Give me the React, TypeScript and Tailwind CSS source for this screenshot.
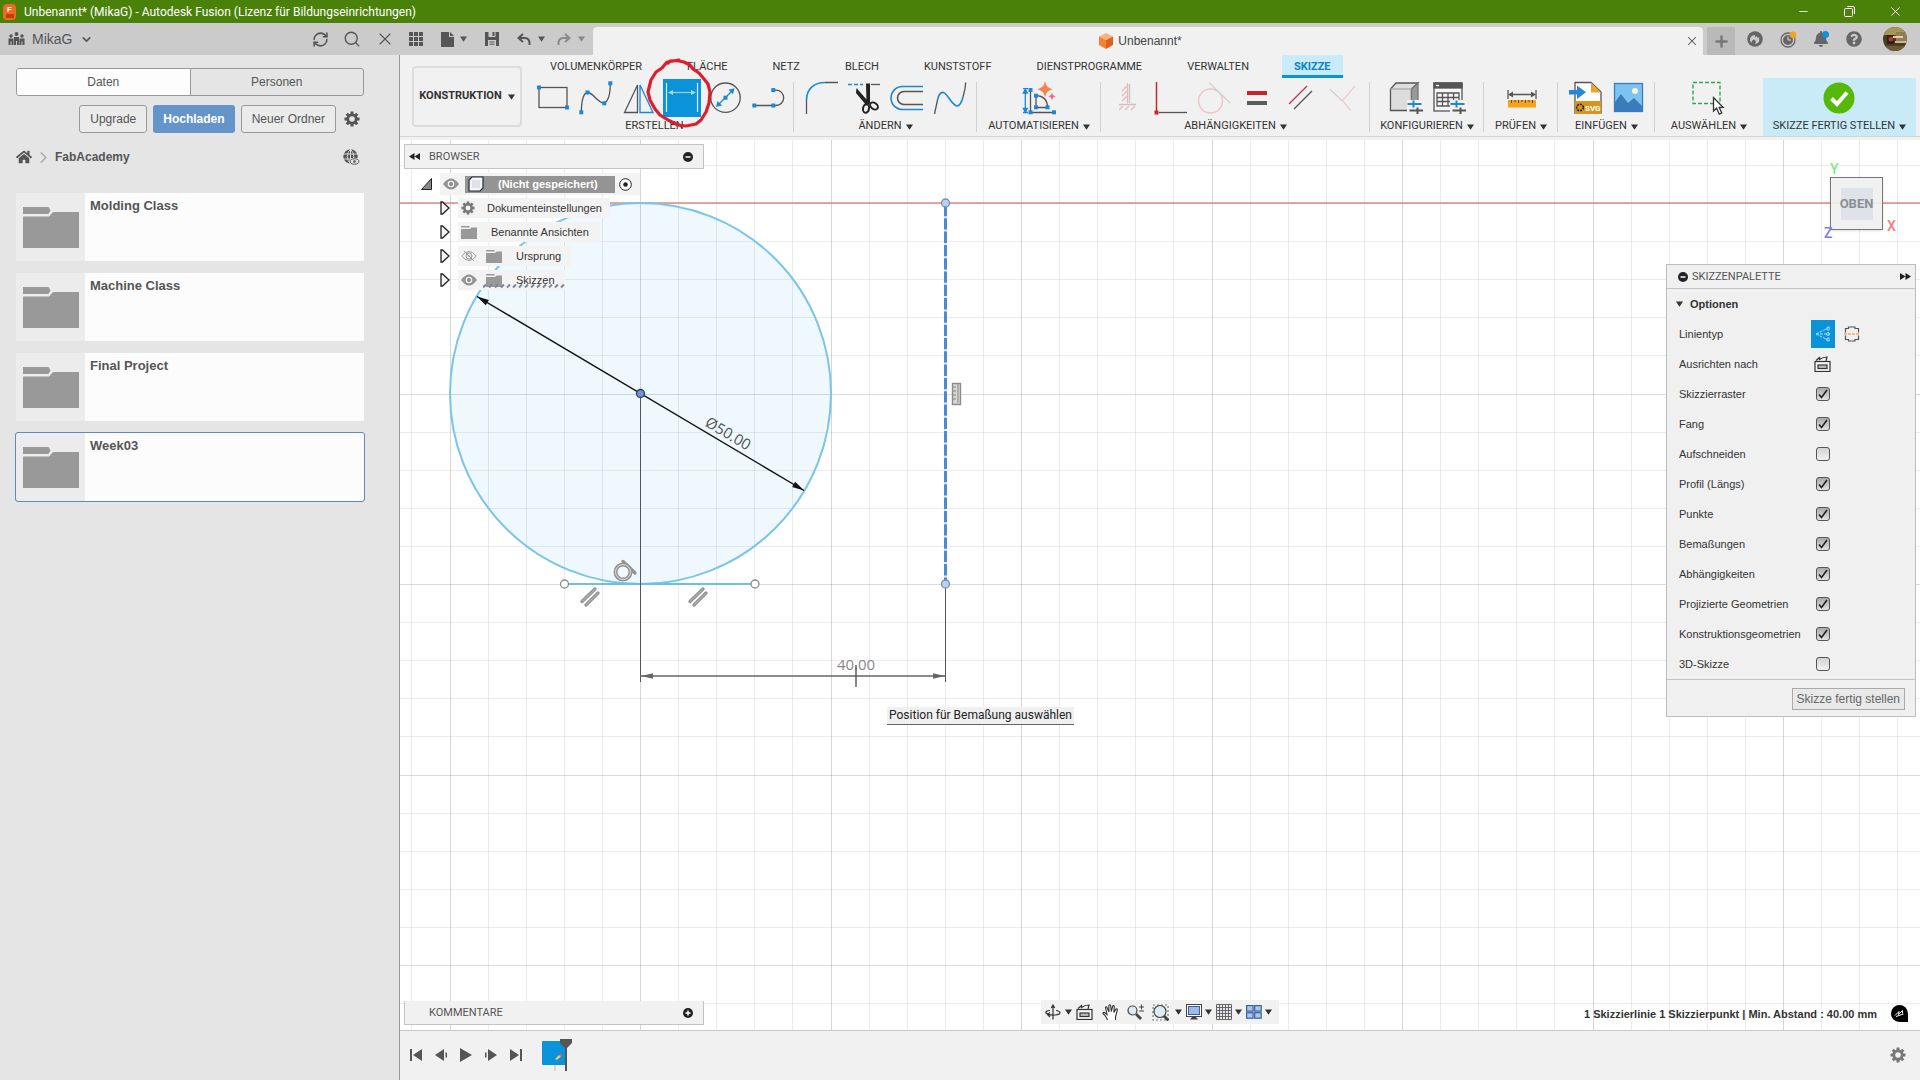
import React from "react";
import { FaUsers, FaHome, FaFile, FaSave, FaBell, FaQuestionCircle } from "react-icons/fa";
import { ChevronDown, ChevronRight, Search, X, Plus, RefreshCw, Minus } from "lucide-react";

const DARK = "#555";
const BLUE = "#1b87d6";

function Caret({ className = "text-[#333]" }: { className?: string }) {
  return (
    <svg width="7" height="6" viewBox="0 0 8 6" className={`shrink-0 ${className}`} aria-hidden="true">
      <path d="M0 0h8L4 6z" fill="currentColor" />
    </svg>
  );
}

function Ico({ children }: { children: React.ReactNode }) {
  return (
    <svg width="38" height="38" viewBox="0 0 38 38" fill="none" stroke={DARK} strokeWidth="1.3" className="shrink-0" aria-hidden="true">
      {children}
    </svg>
  );
}

function Dot({ x, y }: { x: number; y: number }) {
  return <rect x={x - 2} y={y - 2} width="4" height="4" fill={BLUE} stroke="none" />;
}

function Gear({ size, className = "" }: { size: number; className?: string }) {
  const teeth = [0, 45, 90, 135, 180, 225, 270, 315];
  return (
    <svg width={size} height={size} viewBox="0 0 16 16" className={`shrink-0 ${className}`} aria-hidden="true">
      {teeth.map((a) => (
        <rect key={a} x="6.5" y="0.5" width="3" height="4" fill="currentColor" transform={`rotate(${a} 8 8)`} />
      ))}
      <circle cx="8" cy="8" r="4.2" fill="none" stroke="currentColor" strokeWidth="2.8" />
    </svg>
  );
}

/* ---------- ribbon icons ---------- */

const icRect = <Ico><rect x="5" y="8.5" width="28" height="20" /><Dot x={5} y={8.5} /><Dot x={33} y={28.5} /></Ico>;
const icSpline = (
  <Ico>
    <path d="M4.3 33.3C4.5 22 6 14 10.5 13.5C16 13 20 24 27.3 24.3C31.5 22 33.3 15 33.3 4.3" />
    <Dot x={4.3} y={33.3} /><Dot x={10.5} y={13.5} /><Dot x={27.3} y={24.3} /><Dot x={33.3} y={4.3} />
  </Ico>
);
const icMirror = (
  <Ico>
    <path d="M17.5 6V33.5H4.5z" />
    <path d="M20 6V33.5H33z" stroke={BLUE} />
  </Ico>
);
const icCircle = (
  <Ico>
    <circle cx="19.5" cy="18.7" r="14.7" />
    <path d="M12 26L27 11" stroke={BLUE} />
    <path d="M10 28l1.5-6 4.5 4.5zM28.5 9.2l-1.5 6-4.5-4.5z" fill={BLUE} stroke="none" />
    <Dot x={19.5} y={18.7} />
  </Ico>
);
const icSlot = (
  <Ico>
    <path d="M4.3 26.5H27a7.7 7.7 0 0 0 0-15.4H24" />
    <Dot x={5.3} y={26.5} /><Dot x={24.3} y={26.5} /><Dot x={24.3} y={11.1} />
  </Ico>
);
const icFillet = (
  <Ico>
    <path d="M4.5 35V21M23 3.5H36" />
    <path d="M4.5 21C4.5 10 12 3.5 23 3.5" stroke={BLUE} strokeWidth="1.6" />
  </Ico>
);
const icTrim = (
  <Ico>
    <path d="M3 5.5H18" stroke={BLUE} strokeDasharray="4 2" />
    <path d="M26 5.5H35" />
    <path d="M11.5 9L25 24.5l-3.5 2L11 14zM21 4.5h4V24h-3.5z" fill="#222" stroke="none" />
    <ellipse cx="21" cy="29.5" rx="3" ry="4.3" stroke="#222" strokeWidth="2" transform="rotate(10 21 29.5)" />
    <ellipse cx="29" cy="27" rx="3" ry="4.3" stroke="#222" strokeWidth="2" transform="rotate(-55 29 27)" />
  </Ico>
);
const icOffset = (
  <Ico>
    <path d="M35 7.5H14.5a11.5 11.5 0 0 0 0 23H35" stroke={BLUE} strokeWidth="1.6" />
    <path d="M35 12.5H16a6.5 6.5 0 0 0 0 13H35" strokeWidth="1.6" />
  </Ico>
);
const icCurve = (
  <Ico>
    <path d="M3.5 35L6.5 21M32 18C33.5 13 34.5 9 34.7 3.5" />
    <path d="M6.5 21C8 14 10 13 12.5 13.5C17 15 21 27 26.5 27C29.5 26 31 22 32 18" stroke={BLUE} strokeWidth="1.6" />
  </Ico>
);
const icAuto = (
  <Ico>
    <path d="M5.3 10V33M3 9.7H8M3 33.5H8M5.3 10l-2 4h4zM5.3 33.3l-2-4h4z" stroke={BLUE} fill={BLUE} />
    <path d="M10.5 10.5V33.5H34M16 16.5V28.5H27.5C27.5 21 23 17 16 16.5" />
    <Dot x={10.5} y={11} /><Dot x={10.5} y={33.3} /><Dot x={34} y={33.3} />
    <Dot x={16} y={16.7} /><Dot x={16} y={28.3} /><Dot x={27.5} y={28.3} />
    <path d="M25 2c1.2 5 2.5 6.7 8 8.3c-5.5 1.6-6.8 3.2-8 8.2c-1.2-5-2.5-6.6-8-8.2c5.5-1.6 6.8-3.3 8-8.3z" fill="#f5844c" stroke="none" />
    <path d="M32 13.500c.6 2.500 1.300 3.200 3.800 3.900c-2.500.8-3.200 1.500-3.800 4c-.6-2.500-1.300-3.200-3.800-4c2.500-.7 3.200-1.400 3.800-3.900z" fill="#f2689a" stroke="none" />
  </Ico>
);
const icFix = (
  <Ico>
    <path d="M20.5 5V24M10 25.5H27" stroke="#c9c4c4" />
    <path d="M18.5 4V24M18 7l-5 5M18 12l-5 5M18 17l-5 5M26 27l-4 4M20 27l-4 4M14 27l-4 4" stroke="#e9b9bb" />
  </Ico>
);
const icPerp = (
  <Ico>
    <path d="M4.5 3V33" stroke="#c4262c" strokeWidth="1.5" />
    <path d="M7 33.5H35" />
    <rect x="2.5" y="31.5" width="4" height="4" fill="#c4262c" stroke="none" />
  </Ico>
);
const icTangent = (
  <Ico>
    <circle cx="15.5" cy="22" r="12" stroke="#edc6c8" strokeWidth="1.5" />
    <path d="M14 3.5L35 24" stroke="#d3d0d0" />
  </Ico>
);
const icEqual = (
  <Ico>
    <rect x="9" y="12" width="20" height="4" fill="#c4262c" stroke="none" />
    <rect x="9" y="22" width="20" height="4" fill="#5b5b5b" stroke="none" />
  </Ico>
);
const icParallel = (
  <Ico>
    <path d="M8 25L26 7" stroke="#d2333b" />
    <path d="M13 30L31 12" />
  </Ico>
);
const icMid = (
  <Ico>
    <path d="M6 10.5L18.5 22" stroke="#d3cfcf" />
    <path d="M31 7L18.5 21.5L26.5 31.5" stroke="#edcccd" />
  </Ico>
);
const sliders = (
  <g strokeWidth="2">
    <rect x="20" y="21" width="18" height="14" fill="#f1f1f1" stroke="none" />
    <path d="M20.5 25H34.5M26.5 21.5V28.5" stroke={BLUE} />
    <path d="M22.5 31.5H36M30.5 28.5V35" />
  </g>
);
const icConf = (
  <Ico>
    <path d="M3.5 10L9 4H31L24.5 10V31.5H3.5z" fill="#ddd" />
    <path d="M24.5 10L31 4V25L24.5 31.5z" fill="#999" stroke="#777" />
    <path d="M3.5 10H24.5" stroke="#aaa" />
    {sliders}
  </Ico>
);
const icTable = (
  <Ico>
    <rect x="4" y="4" width="28" height="28" fill="#f6f6f6" />
    <rect x="4" y="4" width="28" height="5" fill={DARK} />
    <path d="M6 6.5h3" stroke="#fff" />
    <path d="M7 14H29V27H7zM7 18.5H29M7 22.5H29M12.5 14V27M18 14V27M23.5 14V27" />
    {sliders}
  </Ico>
);
const icMeasure = (
  <Ico>
    <path d="M6 11V20M34 11V20M8 15.5H32" />
    <path d="M6 15.5l5-3v6zM34 15.5l-5-3v6z" fill={DARK} stroke="none" />
    <rect x="6" y="21" width="28" height="7.5" fill="#f5a31a" stroke="none" />
    <path d="M9.5 21v3M13 21v2M16.5 21v3M20 21v2M23.5 21v3M27 21v2M30.5 21v3" stroke="#5f4410" strokeWidth="1" />
  </Ico>
);
const icSvg = (
  <Ico>
    <path d="M9 3.5H25L35 13V34H9z" fill="#fff" />
    <path d="M25 3.5L35 13.5H25z" fill="#e9a42b" stroke="none" />
    <rect x="9" y="22" width="26" height="13" fill="#d8941c" stroke="none" />
    <path d="M3 11h8V6.5l9 6.8l-9 6.7V15.5H3z" fill="#2a86d3" stroke="none" />
    <circle cx="14" cy="28.5" r="3.3" stroke="#222" strokeWidth="1.6" strokeDasharray="2 1" />
    <text x="19" y="31.5" fontSize="8" fontWeight="bold" fill="#fff" stroke="none" fontFamily="Roboto">SVG</text>
  </Ico>
);
const icImage = (
  <Ico>
    <rect x="5.5" y="4.5" width="28" height="28" fill="#7cc3f3" stroke="#3a7cc0" />
    <path d="M6 23L12 15L19 24L25 19L33 27V32H6z" fill="#3a7cba" stroke="none" />
    <circle cx="26" cy="12" r="3" fill="#fdf6c8" stroke="none" />
  </Ico>
);
const icSelect = (
  <Ico>
    <rect x="3" y="3.5" width="27" height="21" stroke="#31a650" strokeDasharray="4 2" strokeWidth="1.4" />
    <path d="M23.5 18.5V32l3-2.8 2.8 6 2.5-1.2-2.7-5.7h4z" fill="#fff" stroke="#333" />
  </Ico>
);
const icDone = (
  <Ico>
    <circle cx="18" cy="19" r="15.5" fill="#56b80a" stroke="none" />
    <path d="M10.5 19.5L16 25L26 13.5" stroke="#fff" strokeWidth="4" />
  </Ico>
);

const dimensionButton = (
  <span className="relative block">
    <svg width="38" height="38" viewBox="0 0 38 38" fill="none" className="bg-[#0a93d9]" aria-hidden="true">
      <path d="M3.5 4V33M34.5 4V33" stroke="#d9f0fb" strokeWidth="1.2" />
      <path d="M8 13.5H30" stroke="#8fd2f3" strokeWidth="1.3" />
      <path d="M5 13.5l5-2.5v5zM33 13.5l-5-2.5v5z" fill="#a5daf5" />
    </svg>
    {/* hand-drawn marker ring around the dimension tool */}
    <svg width="70" height="74" viewBox="645 56 70 74" fill="none" className="pointer-events-none absolute -top-[23px] -left-[18px] z-10 max-w-none" aria-hidden="true">
      <path d="M668 63L670 61L676 60.5L684 62L690 65L693 69L699 73L704 79L708 84L710 92L709 103L706 112L701 120L696 124L686 126L678 125L668 120L660 115L655 109L650 100L648 92L651 80L656 72L662 68L667 62L679 60" stroke="#dc1f2b" strokeWidth="3.2" strokeLinejoin="round" strokeLinecap="round" />
    </svg>
  </span>
);

type Group = { label: string; caretClass?: string; icons: [string, React.ReactNode][]; width: string };

const groups: Group[] = [
  { label: "ERSTELLEN", caretClass: "invisible", width: "w-[263px] pr-[5px]", icons: [["Rechteck", icRect], ["Spline", icSpline], ["Spiegeln", icMirror], ["Bemaßung", dimensionButton], ["Kreis", icCircle], ["Langloch", icSlot]] },
  { label: "ÄNDERN", width: "w-[183px]", icons: [["Abrunden", icFillet], ["Stutzen", icTrim], ["Versatz", icOffset], ["Kurve", icCurve]] },
  { label: "AUTOMATISIEREN", width: "w-[124px]", icons: [["Automatisch", icAuto]] },
  { label: "ABHÄNGIGKEITEN", width: "w-[269px]", icons: [["Fixieren", icFix], ["Lotrecht", icPerp], ["Tangente", icTangent], ["Gleich", icEqual], ["Parallel", icParallel], ["Mittelpunkt", icMid]] },
  { label: "KONFIGURIEREN", width: "w-[114px]", icons: [["Konfiguration", icConf], ["Tabelle", icTable]] },
  { label: "PRÜFEN", width: "w-[74px]", icons: [["Messen", icMeasure]] },
  { label: "EINFÜGEN", width: "w-[97px]", icons: [["SVG einfügen", icSvg], ["Bild einfügen", icImage]] },
];

const ribbonTabs = ["VOLUMENKÖRPER", "FLÄCHE", "NETZ", "BLECH", "KUNSTSTOFF", "DIENSTPROGRAMME", "VERWALTEN", "SKIZZE"];

function GroupLabel({ label, caretClass }: { label: string; caretClass?: string }) {
  return (
    <button type="button" className="flex h-[22px] items-center gap-1 whitespace-nowrap font-[Roboto,sans-serif] text-[11px] text-[#333]">
      {label}
      <Caret className={caretClass} />
    </button>
  );
}

function Ribbon() {
  return (
    <section className="flex h-[82px] shrink-0 border-b border-[#d4d4d4] bg-[#f1f1f1]">
      <button type="button" className="mt-[11px] ml-3 flex h-[61px] w-[110px] shrink-0 items-center justify-center gap-1.5 rounded border-2 border-[#dcdcdc] font-[Roboto,sans-serif] text-[11px] font-bold text-[#333]">
        KONSTRUKTION <Caret />
      </button>
      <div className="flex min-w-0 flex-1 flex-col pl-[9px]">
        <nav className="ml-[7px] flex h-[23px] gap-[21px] font-[Roboto,sans-serif] text-[11px]">
          {ribbonTabs.map((t) => (
            <a
              key={t}
              href="#"
              className={
                t === "SKIZZE"
                  ? "flex items-center border-b-[3px] border-[#0a93d9] bg-[#c9ebf7] px-3 pt-1 font-bold text-[#0a84cc]"
                  : "flex items-center px-3 pt-0.5 text-[#333]"
              }
            >
              {t}
            </a>
          ))}
        </nav>
        <div className="flex h-[58px]">
          {groups.map((g) => (
            <div key={g.label} className={`relative flex shrink-0 flex-col items-center pt-px ${g.width}`}>
              <div className="flex">
                {g.icons.map(([name, icon]) => (
                  <button key={name} type="button" aria-label={name} className="flex w-[43px] justify-center">
                    {icon}
                  </button>
                ))}
              </div>
              <GroupLabel label={g.label} caretClass={g.caretClass} />
              <span className="absolute top-1 right-0 h-[50px] w-px bg-[#d0d0d0]" />
            </div>
          ))}
          <div className="flex flex-1 flex-col items-center pt-px">
            <button type="button" aria-label="Auswahl" className="flex">{icSelect}</button>
            <GroupLabel label="AUSWÄHLEN" />
          </div>
          <div className="mr-1 flex w-[153px] flex-col items-center bg-[#c9ebf7] pt-px">
            <button type="button" aria-label="Fertig" className="flex">{icDone}</button>
            <GroupLabel label="SKIZZE FERTIG STELLEN" />
          </div>
        </div>
      </div>
    </section>
  );
}

/* ---------- title bar and document bar ---------- */

function TitleBar() {
  return (
    <header className="flex h-[23px] shrink-0 items-center bg-[#4a8209] text-white">
      <span className="ml-[3px] flex h-4 w-[13px] flex-col items-center justify-center rounded-sm bg-[#ee6a1f] text-[8px] leading-[9px] font-bold">
        F<span className="h-1 w-2 bg-[#b84305]" />
      </span>
      <h1 className="ml-2 flex-1 font-[Roboto,sans-serif] text-[12px] leading-4">
        Unbenannt* (MikaG) - Autodesk Fusion (Lizenz für Bildungseinrichtungen)
      </h1>
      <button type="button" aria-label="Minimieren" className="flex w-[46px] justify-center"><Minus size={13} strokeWidth={1.5} /></button>
      <button type="button" aria-label="Wiederherstellen" className="flex w-[46px] justify-center">
        <svg width="11" height="11" viewBox="0 0 11 11" fill="none" stroke="#fff" aria-hidden="true">
          <rect x="0.5" y="2.5" width="8" height="8" rx="1" /><path d="M3 .5h6a1.5 1.5 0 0 1 1.5 1.5v6" />
        </svg>
      </button>
      <button type="button" aria-label="Schließen" className="mr-0.5 flex w-[46px] justify-center"><X size={15} strokeWidth={1.5} /></button>
    </header>
  );
}

function People() {
  return (
    <svg width="17" height="14" viewBox="0 0 17 14" fill="#555" aria-hidden="true">
      <circle cx="3" cy="4" r="1.7" /><circle cx="8.5" cy="2" r="1.9" /><circle cx="14" cy="4" r="1.7" />
      <path d="M.5 6.500h5V13H.5zM6 5h5V13H6zM11.500 6.500h5V13h-5z" />
      <path d="M3 9.500V13M8.500 9V13M14 9.500V13" stroke="#cbcbcb" />
    </svg>
  );
}

function Undo({ flip = false }: { flip?: boolean }) {
  return (
    <svg width="14" height="15" viewBox="0 0 14 15" fill="none" aria-hidden="true">
      <g transform={flip ? "translate(14 0) scale(-1 1)" : undefined}>
        <path d="M6 2L1.5 6L6 10M2 6H8.5Q13 6.5 12.5 13" stroke="currentColor" strokeWidth="2" />
      </g>
    </svg>
  );
}

function DocumentBar() {
  return (
    <div className="flex h-8 shrink-0 bg-[#cbcbcb] text-[#555]">
      <div className="flex w-[400px] shrink-0 items-center pl-2">
        <button type="button" className="flex items-center text-[14px] leading-4 text-[#555]">
          <People />
          <span className="ml-[7px]">MikaG</span>
          <ChevronDown size={13} strokeWidth={3} className="ml-2" />
        </button>
        <div className="ml-auto flex items-center gap-[14px] pr-[5px]">
          <button type="button" aria-label="Aktualisieren"><RefreshCw size={17} strokeWidth={2.2} /></button>
          <button type="button" aria-label="Suchen"><Search size={18} strokeWidth={1.8} /></button>
          <button type="button" aria-label="Bereich schließen"><X size={20} strokeWidth={1.3} /></button>
        </div>
      </div>
      <div className="flex w-[193px] shrink-0 items-center">
        <button type="button" aria-label="Datengruppe" className="ml-[9px]">
          <svg width="14" height="14" viewBox="0 0 14 14" fill="#555" aria-hidden="true">
            {[0, 5, 10].map((y) => [0, 5, 10].map((x) => <rect key={`${x}-${y}`} x={x} y={y} width="4" height="4" />))}
          </svg>
        </button>
        <button type="button" aria-label="Datei" className="ml-[18px] flex items-center gap-1.5">
          <svg width="13" height="15" viewBox="0 0 13 15" fill="#555" aria-hidden="true"><path d="M0 0H8V5H13V15H0zM9 0L13 4H9z" /></svg>
          <Caret className="text-[#555]" />
        </button>
        <button type="button" aria-label="Speichern" className="ml-[18px]">
          <svg width="14" height="14" viewBox="0 0 14 14" fill="#555" aria-hidden="true">
            <path d="M0 0H14V14H0z" /><path d="M3.500 0h7v5h-7zM3 8h8v6H3z" fill="#cbcbcb" /><path d="M7.500 0h2v4h-2zM4.500 9.500h5v1h-5zM4.500 11.800h5v1h-5z" />
          </svg>
        </button>
        <button type="button" aria-label="Rückgängig" className="ml-[18px] flex items-center gap-[7px]"><Undo /><Caret className="text-[#555]" /></button>
        <button type="button" aria-label="Wiederholen" className="ml-3 flex items-center gap-[7px] text-[#8a8a8a]"><Undo flip /><Caret className="text-[#888]" /></button>
      </div>
      <div className="mt-1 flex min-w-0 flex-1 items-center rounded-t bg-[#f1f1f1]">
        <div className="flex flex-1 items-center justify-center gap-[5px] pl-[3px] text-[12px] text-[#444]">
          <svg width="14" height="16" viewBox="0 0 14 16" aria-hidden="true">
            <path d="M7 0l7 3.5L7 7L0 3.5z" fill="#fbb27c" /><path d="M0 3.5L7 7v9L0 12z" fill="#f58232" /><path d="M14 3.5L7 7v9l7-4z" fill="#e0621a" />
          </svg>
          Unbenannt*
        </div>
        <button type="button" aria-label="Tab schließen" className="pr-1"><X size={14} strokeWidth={1.8} /></button>
      </div>
      <div className="flex w-[217px] shrink-0 items-center">
        <button type="button" aria-label="Neuer Tab" className="mt-1 ml-1 flex h-7 w-7 items-center justify-center bg-[#b9b9b9]"><Plus size={17} strokeWidth={3.5} className="text-[#777]" /></button>
        <button type="button" aria-label="Erweiterungen" className="ml-3">
          <svg width="16" height="16" viewBox="0 0 16 16" fill="#666" aria-hidden="true">
            <circle cx="8" cy="8" r="7.8" /><path d="M3 10Q2.5 4.5 8 4v2.5l2-1.5 0 1.5 2 0Q13.5 12 8 13Q10 9.5 7 8.5Q5 8.5 4.8 11.5z" fill="#cbcbcb" />
          </svg>
        </button>
        <button type="button" aria-label="Auftragsstatus" className="ml-[17px]">
          <svg width="17" height="17" viewBox="0 0 17 17" fill="none" aria-hidden="true">
            <circle cx="8" cy="9" r="7" stroke="#666" strokeWidth="1.3" /><circle cx="8" cy="9" r="5" fill="#666" /><path d="M8 5.5V9h3" stroke="#ddd" /><circle cx="13" cy="3.8" r="3.3" fill="#f5a31a" />
          </svg>
        </button>
        <button type="button" aria-label="Benachrichtigungen" className="relative ml-4"><FaBell size={16} className="text-[#666]" /><span className="absolute top-0 right-0 h-[7px] w-[7px] rounded-full bg-[#0a93d9]" /></button>
        <button type="button" aria-label="Hilfe" className="ml-[17px]"><FaQuestionCircle size={16} className="text-[#666]" /></button>
        <button type="button" aria-label="Profil" className="ml-[21px]">
          <svg width="24" height="24" viewBox="0 0 24 24" aria-hidden="true">
            <clipPath id="av"><circle cx="12" cy="12" r="12" /></clipPath>
            <g clipPath="url(#av)">
              <rect width="24" height="24" fill="#4b3c22" /><rect width="24" height="8" fill="#a89658" /><rect x="13" y="5" width="11" height="11" fill="#8f7f55" />
              <rect x="4" y="8" width="7" height="9" fill="#2a2018" /><circle cx="8" cy="12" r="2.5" fill="#a83a3a" /><rect x="10" y="9" width="10" height="2" fill="#ddd0a8" /><rect x="12" y="14" width="12" height="2" fill="#cbb988" /><rect y="19" width="24" height="5" fill="#6a5c34" />
            </g>
          </svg>
        </button>
      </div>
    </div>
  );
}

/* ---------- data panel ---------- */

function DataPanel() {
  const btn = "flex h-7 items-center rounded-[3px] border border-[#999] bg-[#ebebeb] px-[10px] text-[12px] text-[#555]";
  return (
    <aside className="w-[400px] shrink-0 border-r border-[#999] bg-[#e5e5e5] pr-[35px] pl-4 text-[#555]">
      <div className="mt-[13px] flex h-7 rounded-[3px] border border-[#999] text-[12px]">
        <button type="button" className="flex-1 rounded-l-[2px] bg-[#fdfdfd]">Daten</button>
        <button type="button" className="flex-1 border-l border-[#999]">Personen</button>
      </div>
      <div className="mt-[9px] flex items-center justify-end gap-1.5 pr-1">
        <button type="button" className={btn}>Upgrade</button>
        <button type="button" className="flex h-7 items-center rounded-[3px] bg-[#6594ca] px-[10px] text-[12px] font-bold text-white">Hochladen</button>
        <button type="button" className={btn}>Neuer Ordner</button>
        <button type="button" aria-label="Einstellungen" className="ml-0.5"><Gear size={16} className="text-[#555]" /></button>
      </div>
      <div className="mt-4 flex h-4 items-center text-[12px] font-bold">
        <FaHome size={16} />
        <ChevronRight size={19} strokeWidth={1.8} className="ml-0.5 text-[#aaa]" />
        <span className="ml-0.5">FabAcademy</span>
        <svg width="17" height="17" viewBox="0 0 17 17" className="mr-1 ml-auto" aria-hidden="true">
          <circle cx="7.5" cy="7.5" r="7.2" fill="#555" />
          <path d="M7.5 0V15M0 5H15M0 10H15M7.5 0Q1 7.5 7.5 15Q14 7.5 7.5 0" stroke="#e5e5e5" fill="none" strokeWidth=".9" />
          <ellipse cx="11.5" cy="12.5" rx="5.5" ry="3.8" fill="#e5e5e5" /><ellipse cx="11.5" cy="12.5" rx="4.3" ry="2.7" fill="none" stroke="#555" /><circle cx="11.5" cy="12.5" r="1.3" fill="#555" />
        </svg>
      </div>
      <ul className="mt-7 flex flex-col gap-3">
        {["Molding Class", "Machine Class", "Final Project", "Week03"].map((name) => (
          <li key={name} className={`flex h-[68px] ${name === "Week03" ? "rounded-[2px] outline outline-[#5b8ac4]" : ""}`}>
            <span className="flex w-[69px] items-center bg-[#ececec] pl-[7px]">
              <svg width="56" height="41" viewBox="0 0 56 41" fill="#999" aria-hidden="true">
                <path d="M0 0H25.5L27.500 3.5L25.5 7H0zM0 9.5H26L30 5H56V41H0z" />
              </svg>
            </span>
            <a href="#" className="flex-1 bg-[#fcfcfc] pt-[5px] pl-[5px] text-[13px] leading-4 font-bold">{name}</a>
          </li>
        ))}
      </ul>
    </aside>
  );
}

/* ---------- sketch canvas ---------- */

const CX = 640;
const CELL = 38.1;

function Drawing() {
  const xs = Array.from({ length: 41 }, (_, i) => i - 6);
  const ys = Array.from({ length: 26 }, (_, i) => i - 2);
  const isMajor = (i: number) => i % 5 === 0;
  const arrows = "#666";
  return (
    <svg className="absolute inset-0 h-full w-full bg-white" aria-hidden="true">
      {/* drawn in window coordinates, shifted to the canvas origin */}
      <g transform="translate(-400 -137)" fill="none">
        <rect x="400" y="137" width="100%" height="3" fill="#f1f1f1" />
        <circle cx="640.5" cy="393.5" r="190.5" fill="#eef8fd" />
        {xs.map((i) => (
          <path key={i} d={`M${Math.round(CX + i * CELL) + 0.5} 140V1200`} stroke="#000" strokeOpacity={isMajor(i) ? 0.16 : 0.075} />
        ))}
        {ys.map((i) => (
          <path key={i} d={`M400 ${Math.round(203 + i * CELL) + 0.5}H3000`} stroke="#000" strokeOpacity={isMajor(i) ? 0.14 : 0.07} />
        ))}
        <path d="M400 203H3000" stroke="#e08a87" strokeWidth="1.6" />
        <circle cx="640.5" cy="393.5" r="190.5" stroke="#7cc4e8" strokeWidth="2" />
        <path d="M564.5 584H755" stroke="#6ebfe8" strokeWidth="2" />
        <path d="M640.5 393V682M945.5 584V682" stroke="#555" />
        <path d="M640 676H945" stroke={arrows} strokeWidth="1.5" />
        <path d="M641 676l12-2.700v5.4zM945 676l-12-2.7v5.4z" fill={arrows} />
        <path d="M477 296.5L804 490.5" stroke="#111" strokeWidth="1.4" />
        <path d="M0 0l12-3v6z" fill="#111" transform="translate(477 296.5) rotate(30.7)" />
        <path d="M0 0l-12-3v6z" fill="#111" transform="translate(804 490.5) rotate(30.7)" />
        <path d="M945.5 205V582" stroke="#e2edf8" strokeWidth="3" />
        <path d="M945.5 205V582" stroke="#4c8ad3" strokeWidth="3" strokeDasharray="11.3 2" />
        <circle cx="640.5" cy="393.5" r="4" fill="#6f96cf" stroke="#333f5c" strokeWidth="1.3" />
        {[[564.5, 584], [755, 584]].map(([x, y]) => (
          <circle key={x} cx={x} cy={y} r="4" fill="#fff" stroke="#8a8a8a" strokeWidth="1.3" />
        ))}
        {[203, 584].map((y) => (
          <circle key={y} cx="945.5" cy={y} r="4" fill="#b6d2f0" stroke="#7a8ea8" strokeWidth="1.3" />
        ))}
        {/* constraint glyphs */}
        <g stroke="#949494" strokeWidth="3.4" strokeLinecap="round">
          <path d="M582 601.500l13-12.500M586 605l12-12M690 601.500l13-12.500M694 605l12-12" />
          <path d="M623 561.500l12 11.500" />
          <circle cx="623" cy="572" r="7.5" strokeWidth="4" />
        </g>
        <g stroke="#eee" strokeWidth=".8">
          <circle cx="623" cy="572" r="7.5" />
          <path d="M582 601.500l13-12.500M586 605l12-12M690 601.500l13-12.500M694 605l12-12" strokeOpacity=".5" />
        </g>
        <rect x="952.5" y="383.5" width="8" height="21" fill="#d6d6d6" stroke="#8c8c8c" strokeWidth="1.4" />
        <path d="M953 387h3M953 391h3M953 395h3M953 399h3M958 384V403" stroke="#888" />
        <g fontFamily="Open Sans, Noto Sans, sans-serif" fontSize="15">
          <text x="0" y="0" fill="#555" textAnchor="middle" transform="translate(725.5 438) rotate(30.7)">Ø50.00</text>
          <text x="856" y="670" fill="#888" textAnchor="middle">40.00</text>
        </g>
        <path d="M856 665V687" stroke="#555" strokeWidth="1.4" />
      </g>
    </svg>
  );
}

function Eye({ off = false }: { off?: boolean }) {
  return (
    <svg width="16" height="12" viewBox="0 0 16 12" fill="none" className="shrink-0" aria-hidden="true">
      {off ? (
        <path d="M.7 6Q8-3 15.3 6Q8 15 .7 6zM3 1L13 11M5 6a3 3 0 0 1 6 0a3 3 0 0 1-6 0M6.5 6h3" stroke="#999" />
      ) : (
        <>
          <path d="M0 6Q8-5 16 6Q8 17 0 6z" fill="#949494" /><circle cx="8" cy="6" r="3.3" fill="#f3f3f3" /><circle cx="8" cy="6" r="2" fill="#888" />
        </>
      )}
    </svg>
  );
}

function Folder() {
  return (
    <svg width="16" height="13" viewBox="0 0 16 13" fill="#999" className="shrink-0" aria-hidden="true">
      <path d="M0 0h8l1 1.5H0zM0 3h9l1.5-1.5H16V13H0z" />
    </svg>
  );
}

function Expand() {
  return (
    <svg width="10" height="14" viewBox="0 0 10 14" fill="#f4f4f4" stroke="#222" strokeWidth="1.3" aria-hidden="true">
      <path d="M1 1h1.5L9 7L2.5 13H1z" />
    </svg>
  );
}

function CircleSign({ plus = false }: { plus?: boolean }) {
  return (
    <svg width="10" height="10" viewBox="0 0 10 10" aria-hidden="true">
      <circle cx="5" cy="5" r="5" fill="#222" />
      <path d={plus ? "M2.5 5h5M5 2.5v5" : "M2.5 5h5"} stroke="#fff" strokeWidth="1.5" />
    </svg>
  );
}

function Double({ flip = false }: { flip?: boolean }) {
  return (
    <svg width="11" height="7" viewBox="0 0 11 7" fill="#222" aria-hidden="true">
      <path d={flip ? "M0 0l5.5 3.5L0 7zM5.5 0L11 3.5L5.5 7z" : "M5.5 0L0 3.5L5.5 7zM11 0L5.5 3.5L11 7z"} />
    </svg>
  );
}

function BrowserPanel() {
  const rows: { name: string; eye?: "on" | "off"; gear?: boolean; pad: string }[] = [
    { name: "Dokumenteinstellungen", gear: true, pad: "pl-[3px] pr-2 gap-3" },
    { name: "Benannte Ansichten", pad: "pl-[3px] pr-3 gap-3.5" },
    { name: "Ursprung", eye: "off", pad: "pl-[3px] pr-2.5 gap-3.5" },
    { name: "Skizzen", eye: "on", pad: "pl-[3px] pr-2.5 gap-3.5" },
  ];
  return (
    <section className="absolute top-[7px] left-1 w-[300px] text-[11px] text-[#333]">
      <div className="flex h-[25px] items-center border border-[#c4c4c4] bg-[#f1f1f1] pr-[10px] pl-1">
        <Double />
        <h2 className="ml-[9px] flex-1 pt-px font-[Roboto,sans-serif] text-[#555]">BROWSER</h2>
        <button type="button" aria-label="Browser reduzieren"><CircleSign /></button>
      </div>
      <div className="mt-[3px] flex h-6 items-center pl-[17px]">
        <svg width="11" height="12" viewBox="0 0 11 12" aria-hidden="true"><path d="M10.5 .5V11.5H.5z" fill="#888" stroke="#222" /></svg>
        <div className="ml-2 flex h-[22px] w-[200px] items-center bg-[#f3f3f3] pl-[3px]">
          <Eye />
          <div className="ml-1.5 flex h-[17px] w-[150px] items-center bg-[#949494] pl-[3px] font-bold text-white">
            <svg width="16" height="16" viewBox="0 0 16 16" aria-hidden="true"><path d="M1 4L4 1H15V12L12 15H1z" fill="#f5f5f7" stroke="#222b40" strokeWidth="1.2" /><path d="M4 4h8v8H4z" fill="#dfe3e8" /></svg>
            <span className="ml-[14px]">(Nicht gespeichert)</span>
          </div>
          <svg width="13" height="13" viewBox="0 0 13 13" className="ml-1" aria-hidden="true"><circle cx="6.5" cy="6.5" r="5.8" fill="#fff" stroke="#222" /><circle cx="6.5" cy="6.5" r="2.3" fill="#222" /></svg>
        </div>
      </div>
      <ul>
        {rows.map((r) => (
          <li key={r.name} className="flex h-6 items-center pl-9">
            <Expand />
            <div className="relative ml-2 flex h-5 items-center bg-[#f3f3f3]">
              {r.eye && <span className="flex w-[25px] justify-end pr-1.5"><Eye off={r.eye === "off"} /></span>}
              <span className={`flex items-center ${r.pad}`}>
                {r.gear ? <Gear size={14} className="text-[#777]" /> : <Folder />}
                {r.name}
              </span>
              {r.name === "Skizzen" && (
                <svg width="82" height="4" viewBox="0 0 82 4" className="absolute bottom-0.5 left-[25px] max-w-none" aria-hidden="true">
                  {Array.from({ length: 14 }, (_, i) => (
                    <path key={i} d={`M${i * 6} 3.5L${i * 6 + 3} .5`} stroke="#7d8494" strokeWidth="2" />
                  ))}
                </svg>
              )}
            </div>
          </li>
        ))}
      </ul>
    </section>
  );
}

function LookAt() {
  return (
    <svg width="17" height="16" viewBox="0 0 17 16" fill="none" stroke="#333" strokeWidth="1.2" aria-hidden="true">
      <rect x="1" y="5.5" width="15" height="10" fill="#f6f6f6" /><rect x="4" y="9" width="9" height="3.5" fill="#b9bfc9" /><path d="M2 4.500L5.500 1.5V3.5Q9 1 13 1L12 5" />
    </svg>
  );
}

const options: [string, boolean][] = [
  ["Skizzierraster", true], ["Fang", true], ["Aufschneiden", false], ["Profil (Längs)", true], ["Punkte", true],
  ["Bemaßungen", true], ["Abhängigkeiten", true], ["Projizierte Geometrien", true], ["Konstruktionsgeometrien", true], ["3D-Skizze", false],
];

function Palette() {
  return (
    <section className="absolute top-[127px] right-1 w-[250px] border border-[#bcbcbc] bg-[#f0f0f0] text-[11px] text-[#333]">
      <div className="flex h-6 items-center border-b border-[#c4c4c4] pr-1 pl-[11px]">
        <CircleSign />
        <h2 className="ml-1 flex-1 pt-px font-[Roboto,sans-serif] text-[#555]">SKIZZENPALETTE</h2>
        <Double flip />
      </div>
      <div className="pl-3">
        <h3 className="-ml-[3px] flex h-[30px] items-center gap-[7px] text-[11px] font-bold"><Caret />Optionen</h3>
        <div className="flex h-[30px] items-center">
          <span className="w-[132px]">Linientyp</span>
          <button type="button" aria-label="Konstruktion" className="flex h-7 w-6 items-center justify-center bg-[#0a93d9]">
            <svg width="18" height="18" viewBox="0 0 18 18" fill="none" stroke="#a9dcf6" aria-hidden="true"><path d="M2 9L16 2M2 9H16M2 9L16 16" strokeDasharray="3 1" /><circle cx="14" cy="3.5" r="1.5" /><circle cx="14" cy="9" r="1.5" /><circle cx="14" cy="14.5" r="1.5" /></svg>
          </button>
          <button type="button" aria-label="Mittellinie" className="ml-[9px]">
            <svg width="16" height="16" viewBox="0 0 16 16" fill="none" stroke="#555" strokeWidth="1.2" aria-hidden="true"><path d="M1.5 6.500V2.500H4.500V1H11V2.500H14.5V6.500M1.5 9.500V13.500H4.500V15H11V13.500H14.5V9.500" /><path d="M0 8H16" stroke="#e0872f" strokeDasharray="3 1" /></svg>
          </button>
        </div>
        <div className="flex h-[30px] items-center">
          <span className="w-[135px]">Ausrichten nach</span>
          <button type="button" aria-label="Ausrichten nach"><LookAt /></button>
        </div>
        {options.map(([name, on]) => (
          <label key={name} className="flex h-[30px] items-center">
            <span className="w-[137px]">{name}</span>
            <span className="relative flex">
              <input type="checkbox" defaultChecked={on} className="peer h-[14px] w-[14px] appearance-none rounded-[3px] border border-[#555] bg-linear-to-b from-[#d2d2d2] to-[#f2f2f2] checked:from-[#a9a9a9] checked:to-[#e2e2e2]" />
              <svg width="14" height="14" viewBox="0 0 14 14" fill="none" className="pointer-events-none absolute inset-0 hidden peer-checked:block" aria-hidden="true">
                <path d="M3 7.5L5.5 10.5L11 3" stroke="#222" strokeWidth="1.6" />
              </svg>
            </span>
          </label>
        ))}
      </div>
      <div className="flex h-[37px] items-center justify-end border-t border-[#c4c4c4] pt-px pr-[10px]">
        <button type="button" className="border border-[#aaa] bg-[#e9e9e9] px-1 text-[12px] leading-5 text-[#666]">Skizze fertig stellen</button>
      </div>
    </section>
  );
}

function ViewCube() {
  return (
    <div className="absolute top-[20px] right-5 h-20 w-[76px] font-[Roboto,sans-serif] text-[14px] leading-4 font-medium">
      <span className="absolute top-1 left-1.5 text-[#7dee7d]">Y</span>
      <span className="absolute top-[61px] left-[63px] text-[#f08080]">X</span>
      <button type="button" className="absolute top-[20px] left-[6px] flex h-[53px] w-[53px] items-center justify-center border border-[#777] bg-[#f0f0f0]/90 shadow">
        <span className="flex h-8 w-8 items-center justify-center bg-[#dfe2e8] text-[13px] font-bold text-[#8b8e96]">OBEN</span>
      </button>
      <span className="absolute top-[68px] left-0 text-[#7a7af0]">Z</span>
    </div>
  );
}

function NavBar() {
  return (
    <div className="absolute bottom-[6px] left-[641px] flex h-6 w-[238px] items-center bg-[#f1f1f1] pl-1">
      <button type="button" aria-label="Orbit" className="flex items-center gap-1">
        <svg width="16" height="16" viewBox="0 0 16 16" fill="none" stroke="#333" strokeWidth="1.2" aria-hidden="true"><path d="M8 15.5V3M6.300 4L8 1l1.7 3M5 6.5Q0 7 1 9Q4 11.5 10 11Q15.5 10.5 15 8.5Q14.5 7 11 6.5M5 8.500L2.500 10.5L5 13" /></svg>
        <Caret />
      </button>
      <button type="button" aria-label="Ausrichten" className="ml-1"><LookAt /></button>
      <button type="button" aria-label="Pan" className="ml-[9px]">
        <svg width="17" height="17" viewBox="0 0 17 17" fill="#fff" stroke="#333" strokeWidth="1.1" aria-hidden="true"><path d="M5.5 16Q4.5 12.5 1 9.5Q1 8 2.5 8.5L5 10.5L3.5 3.5Q4 2 5 3.5L7 8L6.8 1.5Q7.8 0 8.6 1.5L9.3 7.5L10.7 2Q12 1 12.3 2.5L11.8 8.5L14 5Q15.5 4.5 15.3 6L13.5 13V16" /></svg>
      </button>
      <button type="button" aria-label="Zoom" className="ml-2">
        <svg width="17" height="16" viewBox="0 0 17 16" fill="none" stroke="#444" strokeWidth="1.2" aria-hidden="true"><circle cx="5.5" cy="6.5" r="4.5" fill="#d9eef2" /><path d="M9 10l5 5" strokeWidth="2.8" /><path d="M12 3h5M14.5 .5v5M12 7h5" strokeWidth="1" /></svg>
      </button>
      <button type="button" aria-label="Einpassen" className="ml-2 flex items-center gap-1.5">
        <svg width="17" height="17" viewBox="0 0 17 17" fill="none" stroke="#444" strokeWidth="1.2" aria-hidden="true"><rect x="1" y="1" width="15" height="15" strokeDasharray="2 2" stroke="#777" /><circle cx="8" cy="7.5" r="6" fill="#d9eef2" /><path d="M12 12l4.5 4.5" strokeWidth="2.8" /></svg>
        <Caret />
      </button>
      <button type="button" aria-label="Anzeige" className="ml-1 flex items-center gap-[3px]">
        <svg width="16" height="16" viewBox="0 0 16 16" aria-hidden="true"><rect x=".5" y=".5" width="15" height="12" fill="#fff" stroke="#444" /><rect x="2.5" y="2.5" width="11" height="8" fill="#9dbbe6" stroke="#3c5f96" /><path d="M6 13h4l2 2.5H4z" fill="#444" /></svg>
        <Caret />
      </button>
      <button type="button" aria-label="Raster" className="ml-1 flex items-center gap-[3px]">
        <svg width="16" height="16" viewBox="0 0 16 16" fill="#e8e8ee" stroke="#666" aria-hidden="true"><path d="M.5 .5h15v15H.5zM3.5 0v16M6.5 0v16M9.5 0v16M12.5 0v16M0 3.5h16M0 6.5h16M0 9.5h16M0 12.5h16" /></svg>
        <Caret />
      </button>
      <button type="button" aria-label="Ansichtsfenster" className="ml-1 flex items-center gap-[3px]">
        <svg width="16" height="14" viewBox="0 0 16 14" fill="#a9c7ee" stroke="#3c5f96" strokeWidth="1.2" aria-hidden="true"><rect x=".6" y=".6" width="6.5" height="5.5" /><rect x="8.7" y=".6" width="6.5" height="5.5" /><rect x=".6" y="7.700" width="6.5" height="5.5" /><rect x="8.7" y="7.7" width="6.5" height="5.5" /></svg>
        <Caret />
      </button>
    </div>
  );
}

function Canvas() {
  return (
    <main className="relative min-h-0 flex-1 overflow-hidden">
      <Drawing />
      <BrowserPanel />
      <ViewCube />
      <Palette />
      <div role="tooltip" className="absolute top-[570px] left-[487px] border-b border-[#666] bg-[#f0f0f0] px-0.5 font-[Roboto,sans-serif] text-[12px] leading-[17px] whitespace-nowrap text-[#222]">
        Position für Bemaßung auswählen
      </div>
      <section className="absolute bottom-[5px] left-1 flex h-6 w-[300px] items-center border-x border-b border-[#c4c4c4] bg-[#f1f1f1] pt-px pr-[10px] pl-6 text-[11px] text-[#555]">
        <h2 className="flex-1 pt-px font-[Roboto,sans-serif]">KOMMENTARE</h2>
        <button type="button" aria-label="Kommentar hinzufügen"><CircleSign plus /></button>
      </section>
      <NavBar />
      <div className="absolute right-3 bottom-2 flex items-center gap-[14px] text-[11px] leading-4 font-bold text-[#333]">
        1 Skizzierlinie 1 Skizzierpunkt | Min. Abstand : 40.00 mm
        <svg width="17" height="17" viewBox="0 0 17 17" aria-hidden="true"><path d="M8.5 0A8.5 8.5 0 0 1 17 8.5V17H8.5A8.5 8.5 0 0 1 8.5 0z" fill="#000" /><path d="M4 10.5L8 6.5L7.500 9.500L11.500 5.500V8.500M5 11.5L12.500 9" stroke="#fff" fill="none" /></svg>
      </div>
    </main>
  );
}

function Timeline() {
  return (
    <footer className="flex h-[50px] shrink-0 items-center border-t border-[#c8c8c8] bg-[#f1f1f1] pr-3.5 pb-0.5 pl-[10px]">
      <div className="flex items-center gap-[13px]">
        <button type="button" aria-label="Anfang"><svg width="12" height="12" viewBox="0 0 12 12" fill="#555"><path d="M0 0h2v12H0zM12 0v12L3 6z" /></svg></button>
        <button type="button" aria-label="Schritt zurück"><svg width="12" height="12" viewBox="0 0 12 12" fill="#555"><path d="M9 0v12L0 6zM10.5 3.5H12v5h-1.5z" /></svg></button>
        <button type="button" aria-label="Abspielen"><svg width="12" height="14" viewBox="0 0 12 14" fill="#555"><path d="M0 0l12 7L0 14z" /></svg></button>
        <button type="button" aria-label="Schritt vor"><svg width="12" height="12" viewBox="0 0 12 12" fill="#555"><path d="M3 0v12l9-6zM0 3.5h1.5v5H0z" /></svg></button>
        <button type="button" aria-label="Ende"><svg width="12" height="12" viewBox="0 0 12 12" fill="#555"><path d="M10 0h2v12h-2zM0 0v12l9-6z" /></svg></button>
      </div>
      <button type="button" aria-label="Skizze 1" className="ml-5">
        <svg width="31" height="32" viewBox="0 0 31 32" aria-hidden="true">
          <rect y="2" width="24" height="24" rx="1" fill="#0a93d9" />
          <path d="M13 26V32" stroke="#bbb" /><path d="M13 20l4-4 2 1.5-4 3.5z" fill="#f0c75c" /><path d="M17 16l1.5-1.5 2 1.5-1.5 1.500z" fill="#d9635c" />
          <path d="M18 0H30V4L25 9V32H23V9L18 4z" fill="#555" />
        </svg>
      </button>
      <button type="button" aria-label="Zeitachseneinstellungen" className="ml-auto"><Gear size={16} className="text-[#777]" /></button>
    </footer>
  );
}

export default function App() {
  return (
    <div className="flex h-screen flex-col overflow-hidden font-['Liberation_Sans',sans-serif]">
      <TitleBar />
      <DocumentBar />
      <div className="flex min-h-0 flex-1">
        <DataPanel />
        <div className="flex min-w-0 flex-1 flex-col">
          <Ribbon />
          <Canvas />
          <Timeline />
        </div>
      </div>
    </div>
  );
}
